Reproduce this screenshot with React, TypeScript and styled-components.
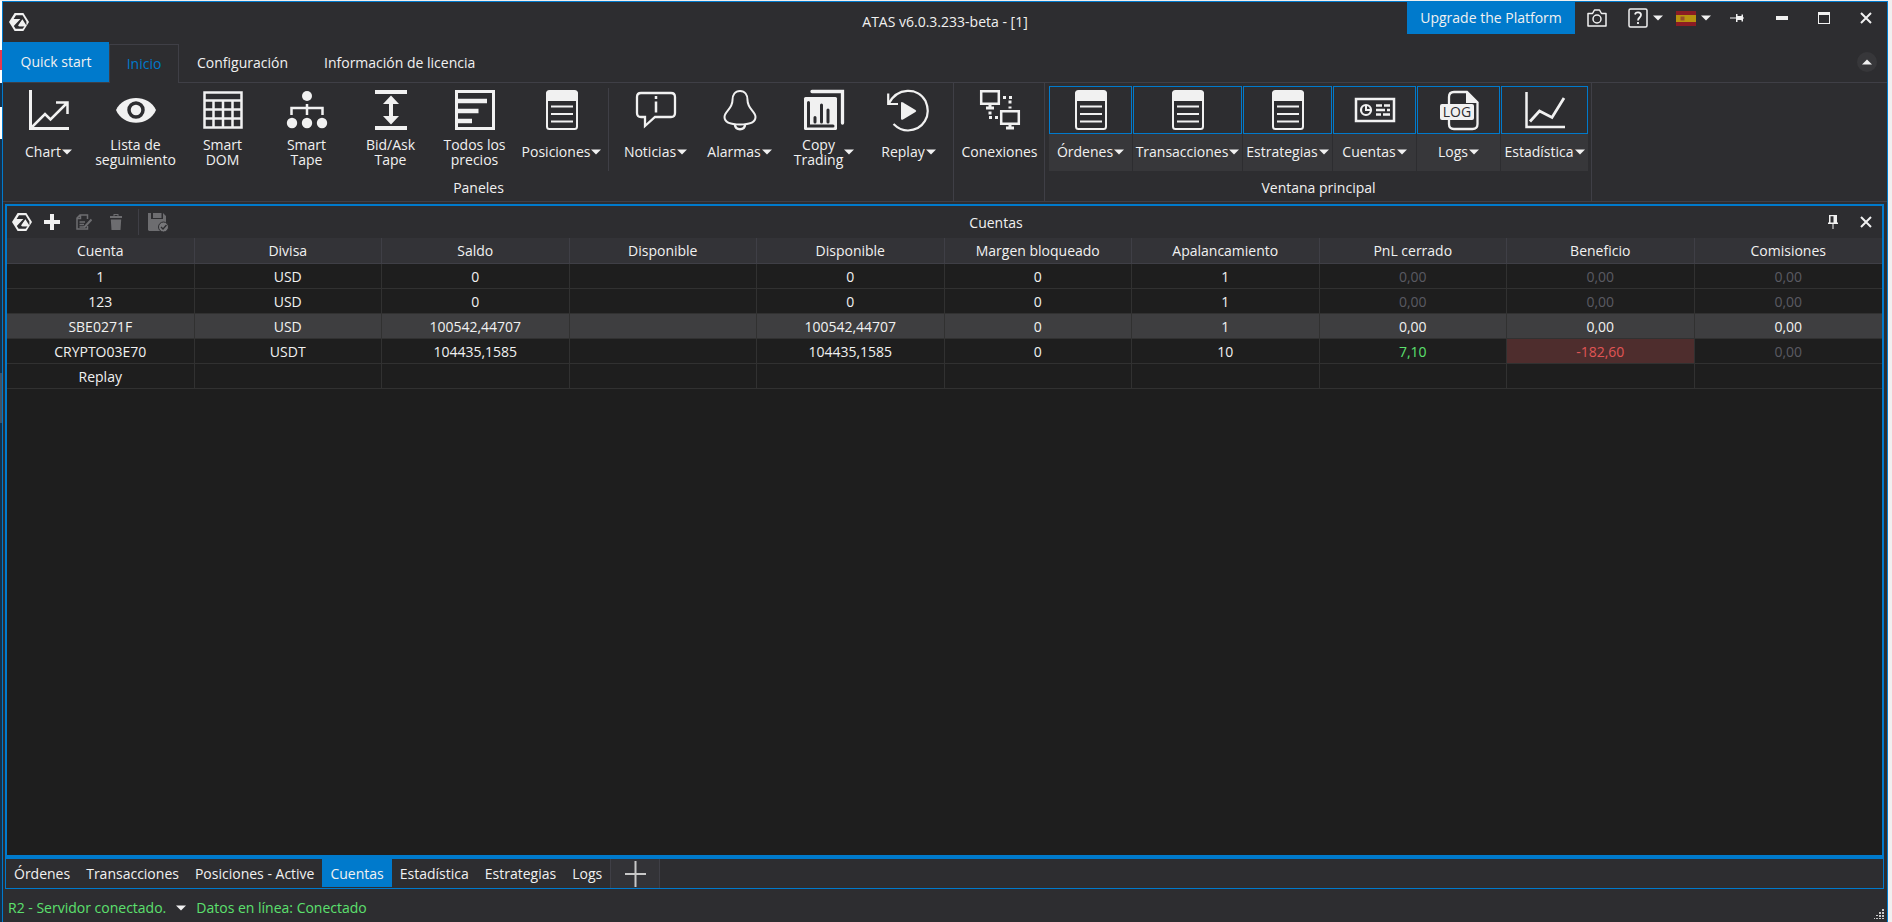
import React from "react";
import styled, { createGlobalStyle, css } from "styled-components";

const c = {
  accent: "#007acc",
  chrome: "#2d2d30",
  raised: "#37373a",
  header: "#333337",
  line: "#3f3f46",
  grid: "#313131",
  dark: "#1e1e1e",
  text: "#f1f1f1",
  faint: "#5a5a62",
  green: "#5ce06e",
  red: "#e05555",
};

const Global = createGlobalStyle`
  * { box-sizing: border-box; }
  body { margin: 0; background: #14304a; font: 14px/16px "Open Sans", "Noto Sans", sans-serif; color: ${c.text}; }
  button { font: inherit; color: inherit; background: none; border: 0; padding: 0; margin: 0; }
  svg { display: block; flex: none; }
`;

/* ---------- window ---------- */
const Desktop = styled.div`
  display: flex;
  min-height: 100vh;
  padding: 1px 4px 0 2px;
  background:
    linear-gradient(#f0f0f0, #f0f0f0) right top / 4px 100% no-repeat,
    linear-gradient(#f0f0f0, #f0f0f0) left top / 100% 1px no-repeat,
    linear-gradient(#ffffff 0 50px, #e8384f 50px 70px, #ffffff 70px 83px, #14304a 83px 107px, #ffffff 107px 139px, #14304a 139px 373px, #3f5266 373px 423px, #14304a 423px);
`;
const Window = styled.div`
  flex: 1;
  min-width: 0;
  display: flex;
  flex-direction: column;
  background: ${c.chrome};
  border: 1px solid ${c.accent};
  border-bottom: 0;
`;
const TitleBar = styled.header`
  display: grid;
  grid-template-columns: 1fr auto 1fr;
  height: 40px;
`;
const Brand = styled.div`
  padding: 10px 6px;
`;
const Title = styled.h1`
  margin: 0;
  font-size: 14px;
  font-weight: 400;
  line-height: 40px;
`;
const TitleActions = styled.div`
  display: flex;
  justify-content: flex-end;
  align-items: flex-start;
`;
const Upgrade = styled.button`
  height: 32px;
  width: 168px;
  margin-right: 12px;
  background: ${c.accent};
`;
const TitleButton = styled.button<{ $w: number }>`
  display: flex;
  align-items: center;
  gap: 5px;
  width: ${(p) => p.$w}px;
  height: 32px;
`;

/* ---------- ribbon ---------- */
const TabRow = styled.nav`
  display: flex;
  height: 41px;
  border-bottom: 1px solid ${c.line};
`;
const QuickStart = styled.button`
  width: 106px;
  background: ${c.accent};
`;
const RibbonTab = styled.button<{ $active?: boolean }>`
  padding: 2px 18px 0;
  ${(p) =>
    p.$active &&
    css`
      color: ${c.accent};
      background: ${c.chrome};
      border: 1px solid ${c.line};
      border-bottom: 0;
      margin: 2px 0 -1px;
      width: 70px;
      padding: 0;
    `}
`;
const Collapse = styled.button`
  display: grid;
  place-items: center;
  align-self: center;
  width: 20px;
  height: 20px;
  margin: 0 10px 0 auto;
  border-radius: 50%;
  background: ${c.raised};
`;
const Ribbon = styled.div`
  display: flex;
  height: 119px;
  border-bottom: 1px solid ${c.line};
`;
const Group = styled.section`
  padding: 3px 3px 0 4px;
  border-right: 1px solid ${c.line};
`;
const Tools = styled.div`
  display: flex;
  gap: 1px;
`;
const Caption = styled.div`
  text-align: center;
  line-height: 34px;
`;
const Divider = styled.div`
  width: 1px;
  height: 83px;
  margin: 2px 4px 0 1px;
  background: ${c.line};
`;
const Tool = styled.button<{ $w: number; $on?: boolean }>`
  display: flex;
  flex-direction: column;
  width: ${(p) => p.$w}px;
  height: 85px;
  background: ${(p) => (p.$on ? c.raised : "none")};
`;
const ToolIcon = styled.span<{ $on?: boolean }>`
  display: grid;
  place-items: center;
  width: 100%;
  height: 48px;
  border: 1px solid ${(p) => (p.$on ? c.accent : "transparent")};
  background: ${c.chrome};
`;
const ToolLabel = styled.span`
  flex: 1;
  display: flex;
  align-items: center;
  justify-content: center;
  gap: 1px;
  width: 100%;
  line-height: 15px;
  white-space: pre;
  padding-bottom: 2px;
`;

/* ---------- docked panel ---------- */
const Panel = styled.main`
  flex: 1;
  display: flex;
  flex-direction: column;
  margin: 2px 3px 0 2px;
  border: 2px solid ${c.accent};
  border-bottom-width: 4px;
  background: ${c.dark};
`;
const PanelBar = styled.div`
  display: flex;
  align-items: center;
  height: 32px;
  background: ${c.chrome};
`;
const PanelTools = styled.div`
  display: flex;
  align-items: center;
  padding-left: 5px;
`;
const PanelTitle = styled.h2`
  flex: 1;
  margin: 0;
  padding-top: 2px;
  text-align: center;
  font-size: 14px;
  font-weight: 400;
  line-height: 30px;
`;
const PanelActions = styled(PanelTools)`
  gap: 22px;
  padding-right: 10px;
`;
const IconButton = styled.button<{ $gap?: number }>`
  display: grid;
  place-items: center;
  height: 24px;
  margin-right: ${(p) => p.$gap ?? 0}px;
`;
const ToolSep = styled.div`
  width: 1px;
  height: 26px;
  margin-right: 9px;
  background: ${c.line};
`;
const Table = styled.table`
  width: 100%;
  table-layout: fixed;
  border-collapse: separate;
  border-spacing: 0;
  text-align: center;
`;
const Th = styled.th`
  height: 26px;
  padding: 0;
  font-weight: 400;
  background: ${c.header};
  border: 0 solid ${c.line};
  border-width: 0 1px 1px 0;
  &:last-child { border-right: 0; }
`;
type Tone = "faint" | "green" | "loss" | "text";
const Td = styled.td<{ $tone: Tone }>`
  height: 25px;
  padding: 2px 0 0;
  border: 0 solid ${c.grid};
  border-width: 0 1px 1px 0;
  color: ${(p) => ({ faint: c.faint, green: c.green, loss: c.red, text: c.text })[p.$tone]};
  background: ${(p) => (p.$tone === "loss" ? "#4e2d2d" : "none")};
  &:last-child { border-right: 0; }
`;
const Tr = styled.tr<{ $selected?: boolean }>`
  background: ${(p) => (p.$selected ? "#3e3e40" : "none")};
`;

/* ---------- bottom ---------- */
const DockTabs = styled.nav`
  display: flex;
  height: 30px;
  margin: 0 3px 0 2px;
  border: 1px solid ${c.accent};
  border-top: 0;
`;
const DockTab = styled.button<{ $active?: boolean }>`
  padding: 2px 8px 0;
  margin-bottom: 1px;
  background: ${(p) => (p.$active ? c.accent : "none")};
`;
const AddTab = styled.button`
  display: grid;
  place-items: center;
  width: 50px;
  background: ${c.header};
  border: 1px solid ${c.line};
  border-width: 0 1px;
`;
const Status = styled.footer`
  display: flex;
  align-items: center;
  gap: 10px;
  height: 33px;
  padding: 4px 3px 0 5px;
  color: ${c.green};
`;
const Grip = styled.svg`
  margin-left: auto;
  align-self: flex-end;
  margin-bottom: 3px;
`;

/* ---------- icons ---------- */
const F = "#f1f1f1";
const Caret = ({ up = false }: { up?: boolean }) => (
  <svg width="10" height="6" viewBox="0 0 10 6" aria-hidden>
    <path d={up ? "M0 5.5 5 .5l5 5z" : "M0 .5h10L5 5.5z"} fill={F} />
  </svg>
);
const Logo = () => (
  <svg width="20" height="20" viewBox="0 0 20 20" aria-label="ATAS">
    <path d="M5.6 1h8.8L20 10l-5.600 9H5.600L0 10z" fill={F} />
    <path d="M7 3.200h6.600L17.400 9.400v4L13.400 7.200 9 13.600l1.400.600h5.200l-2 2.600H6.600L4.800 14 11.400 7H4.600z" fill={c.chrome} />
    <path d="M12.600 8.800l3.600 5.400H9.600z" fill={F} />
  </svg>
);
const Ico = ({ children }: { children: React.ReactNode }) => (
  <svg width="44" height="44" viewBox="0 0 44 44" fill="none" stroke={F} strokeWidth="2" aria-hidden>
    {children}
  </svg>
);
const list = (
  <Ico>
    <rect x="7" y="4" width="30" height="37" rx="2.500" />
    <path d="M7 5.500Q7 3 9.500 3h25Q37 3 37 5.500V12H7z" fill={F} />
    <path d="M11 18.500h22M11 26h22M11 33.500h22" />
  </Ico>
);
const icons = {
  chart: (
    <Ico>
      <path d="M3.500 2v38.500H42" strokeWidth="3" />
      <path d="M4 40 18 26l5.500 5.500L40 15M29 14.500h11.500V26" strokeWidth="2.500" />
    </Ico>
  ),
  eye: (
    <Ico>
      <path d="M2 22C9 6 35 6 42 22 35 39 9 39 2 22z" fill={F} stroke="none" />
      <circle cx="22" cy="22" r="7" stroke={c.chrome} strokeWidth="3.500" />
    </Ico>
  ),
  dom: (
    <Ico>
      <path d="M3.500 4.500h37v35h-37zM3 12.500h38M12.500 13v26M22 13v26M31.500 13v26M3 21.500h38M3 30.500h38" strokeWidth="2.500" />
    </Ico>
  ),
  tape: (
    <Ico>
      <circle cx="22" cy="8" r="5" fill={F} stroke="none" />
      {[7, 22, 37].map((x) => <circle key={x} cx={x} cy="35" r="5.200" fill={F} stroke="none" />)}
      <path d="M22 16v11M6.500 27v-7h31v7" strokeWidth="2.500" />
    </Ico>
  ),
  bidask: (
    <Ico>
      <path d="M6 4h32M6 40h32M22 13v18" strokeWidth="4" />
      <path d="M22 7.500l8 8.500H14zM22 36.500l8-8.500H14z" fill={F} stroke="none" />
    </Ico>
  ),
  prices: (
    <Ico>
      <path d="M3.500 3.500h37v37h-37z" strokeWidth="3" />
      <path d="M5 13h29M5 23h20.500M5 33h14" strokeWidth="4.500" />
    </Ico>
  ),
  list,
  news: (
    <Ico>
      <path d="M7 5h30q4 0 4 4v16q0 4-4 4H21l-10 9v-9H7q-4 0-4-4V9q0-4 4-4z" strokeWidth="2.300" />
      <path d="M22 13.500v11M22 8v3" strokeWidth="2.500" />
    </Ico>
  ),
  bell: (
    <Ico>
      <path d="M22 3c5 0 7.500 4 7.500 9 0 9 8 11.500 8 17 0 5.500-7 7.500-15.500 7.500S6.500 34.500 6.500 29c0-5.500 8-8 8-17C14.500 7 17 3 22 3z" />
      <path d="M17 37c.500 5.500 9.500 5.500 10 0" strokeWidth="2.500" />
    </Ico>
  ),
  copy: (
    <Ico>
      <path d="M10 3.500h30.500V35" strokeWidth="3.300" strokeLinecap="round" />
      <rect x="2" y="9" width="33" height="33" rx="1.500" fill={F} stroke="none" />
      <path d="M6.500 14.500V38H31M13 29.500V34M19.500 17v17M26 22v12" stroke={c.chrome} strokeWidth="3" strokeLinecap="round" />
    </Ico>
  ),
  replay: (
    <Ico>
      <path d="M1.500 16C10-1 31-1 38.500 13 45 28 36 42 21 42.500c-6 0-11-3-14.500-6.500M1.200 5.500V16H11" strokeWidth="2.200" />
      <path d="M16 14.500q-2-1.200-2 1v15q0 2 2 1l12.500-7.500q1.500-1 0-2z" fill={F} stroke="none" />
    </Ico>
  ),
  conn: (
    <Ico>
      <path d="M3.200 3.200h17.600v12.600H3.200zM23.200 23.200h17.600v12.600H23.200z" strokeWidth="2.500" />
      <path d="M12 16v3M8 20h8M32 36v3M28 40h8" strokeWidth="3" />
      <path d="M25 9.500h9M32 12.500v8M12 23.500v4M11 29.500h9" strokeWidth="3" strokeDasharray="3 3" />
    </Ico>
  ),
  card: (
    <Ico>
      <rect x="3" y="11" width="38" height="22" strokeWidth="2.500" />
      <circle cx="13" cy="22" r="5" strokeWidth="2.200" />
      <path d="M13 18v4h4" />
      <path d="M23 17.500h6M31 17.500h6M23 22h9M34 22h3M23 26.500h5M30 26.500h7" strokeWidth="2.500" />
    </Ico>
  ),
  log: (
    <Ico>
      <path d="M12 16V9q0-5 5-5h13l10.500 10.500V36q0 5-5 5H17q-5 0-5-5v-4" strokeWidth="2.300" />
      <path d="M29 3 41.500 15H29z" fill={F} stroke="none" />
      <rect x="3" y="16" width="34" height="16" rx="2" fill={F} stroke="none" />
      <text x="20" y="29" textAnchor="middle" fontSize="14" fill={c.chrome} stroke="none">LOG</text>
    </Ico>
  ),
  stats: (
    <Ico>
      <path d="M3.500 4v35H42" strokeWidth="2.500" />
      <path d="M7 33.500 16.500 23 29 29.500 41 10" strokeWidth="2.800" />
    </Ico>
  ),
};

/* ---------- data ---------- */
type Item = { icon: keyof typeof icons; label: string; w: number; menu?: boolean };
const panels: Item[] = [
  { icon: "chart", label: "Chart", w: 83, menu: true },
  { icon: "eye", label: "Lista de\nseguimiento", w: 89 },
  { icon: "dom", label: "Smart\nDOM", w: 83 },
  { icon: "tape", label: "Smart\nTape", w: 83 },
  { icon: "bidask", label: "Bid/Ask\nTape", w: 83 },
  { icon: "prices", label: "Todos los\nprecios", w: 83 },
  { icon: "list", label: "Posiciones", w: 89, menu: true },
];
const panels2: Item[] = [
  { icon: "news", label: "Noticias", w: 83, menu: true },
  { icon: "bell", label: "Alarmas", w: 83, menu: true },
  { icon: "copy", label: "Copy\nTrading", w: 84, menu: true },
  { icon: "replay", label: "Replay", w: 83, menu: true },
];
const mainTools: Item[] = [
  { icon: "list", label: "Órdenes", w: 83, menu: true },
  { icon: "list", label: "Transacciones", w: 109, menu: true },
  { icon: "list", label: "Estrategias", w: 89, menu: true },
  { icon: "card", label: "Cuentas", w: 83, menu: true },
  { icon: "log", label: "Logs", w: 83, menu: true },
  { icon: "stats", label: "Estadística", w: 87, menu: true },
];
const columns = ["Cuenta", "Divisa", "Saldo", "Disponible", "Disponible", "Margen bloqueado", "Apalancamiento", "PnL cerrado", "Beneficio", "Comisiones"];
const rows = [
  ["1", "USD", "0", "", "0", "0", "1", "0,00", "0,00", "0,00"],
  ["123", "USD", "0", "", "0", "0", "1", "0,00", "0,00", "0,00"],
  ["SBE0271F", "USD", "100542,44707", "", "100542,44707", "0", "1", "0,00", "0,00", "0,00"],
  ["CRYPTO03E70", "USDT", "104435,1585", "", "104435,1585", "0", "10", "7,10", "-182,60", "0,00"],
  ["Replay", "", "", "", "", "", "", "", "", ""],
];
const selected = 2;
const dock = ["Órdenes", "Transacciones", "Posiciones - Active", "Cuentas", "Estadística", "Estrategias", "Logs"];

const toneOf = (value: string, row: number): Tone => {
  if (value === "0,00") return row === selected ? "text" : "faint";
  if (value === "7,10") return "green";
  return value.startsWith("-") ? "loss" : "text";
};

const ToolButtons = ({ items, on }: { items: Item[]; on?: boolean }) => (
  <>
    {items.map((t) => (
      <Tool key={t.label} $w={t.w} $on={on}>
        <ToolIcon $on={on}>{icons[t.icon]}</ToolIcon>
        <ToolLabel>
          <span>{t.label}</span>
          {t.menu && <Caret />}
        </ToolLabel>
      </Tool>
    ))}
  </>
);

const Close = () => (
  <svg width="12" height="12" viewBox="0 0 12 12" stroke={F} strokeWidth="2" aria-hidden>
    <path d="M1 1l10 10M11 1 1 11" />
  </svg>
);

export default function App() {
  return (
    <Desktop>
      <Global />
      <Window>
        <TitleBar>
          <Brand><Logo /></Brand>
          <Title>ATAS v6.0.3.233-beta - [1]</Title>
          <TitleActions>
            <Upgrade>Upgrade the Platform</Upgrade>
            <TitleButton $w={41} aria-label="Captura">
              <svg width="20" height="18" viewBox="0 0 20 18" fill="none" stroke={F} strokeWidth="1.500">
                <path d="M1 4.500h4.500L7.500 1h5l2 3.500H19V17H1z" strokeLinejoin="round" />
                <circle cx="10" cy="10" r="4" />
              </svg>
            </TitleButton>
            <TitleButton $w={48} aria-label="Ayuda">
              <svg width="20" height="20" viewBox="0 0 20 20" fill="none" stroke={F} strokeWidth="1.500">
                <rect x="1" y="1" width="18" height="18" rx="1.500" />
                <path d="M7 6.500c.500-3 6-3 6 .500 0 2.500-3 2.500-3 5.500M10 14v2" strokeWidth="1.800" />
              </svg>
              <Caret />
            </TitleButton>
            <TitleButton $w={54} aria-label="Idioma">
              <svg width="20" height="15" viewBox="0 0 20 15">
                <path d="M0 0h20v15H0z" fill="#8b1c24" />
                <path d="M0 4h20v7H0z" fill="#b8920f" />
                <path d="M4.500 5.500h4v4h-4z" fill="#96502a" />
              </svg>
              <Caret />
            </TitleButton>
            <TitleButton $w={46} aria-label="Fijar ventana">
              <svg width="14" height="8" viewBox="0 0 14 8" fill={F}>
                <path d="M0 3.500h6v1H0zM6 0h1.500v2h4V.500H13v3h1v1h-1v3h-1.500V6h-4v2H6z" />
              </svg>
            </TitleButton>
            <TitleButton $w={42} aria-label="Minimizar">
              <svg width="12" height="4" viewBox="0 0 12 4"><path d="M0 0h12v4H0z" fill={F} /></svg>
            </TitleButton>
            <TitleButton $w={42} aria-label="Maximizar">
              <svg width="12" height="12" viewBox="0 0 12 12"><path d="M0 0h12v12H0zM1 3v8h10V3z" fill={F} fillRule="evenodd" /></svg>
            </TitleButton>
            <TitleButton $w={27} aria-label="Cerrar"><Close /></TitleButton>
          </TitleActions>
        </TitleBar>

        <TabRow>
          <QuickStart>Quick start</QuickStart>
          <RibbonTab $active>Inicio</RibbonTab>
          <RibbonTab>Configuración</RibbonTab>
          <RibbonTab>Información de licencia</RibbonTab>
          <Collapse aria-label="Contraer"><Caret up /></Collapse>
        </TabRow>

        <Ribbon>
          <Group>
            <Tools>
              <ToolButtons items={panels} />
              <Divider />
              <ToolButtons items={panels2} />
            </Tools>
            <Caption>Paneles</Caption>
          </Group>
          <Group>
            <Tools><ToolButtons items={[{ icon: "conn", label: "Conexiones", w: 83 }]} /></Tools>
          </Group>
          <Group>
            <Tools><ToolButtons items={mainTools} on /></Tools>
            <Caption>Ventana principal</Caption>
          </Group>
        </Ribbon>

        <Panel>
          <PanelBar>
            <PanelTools>
              <IconButton $gap={12} aria-label="ATAS"><Logo /></IconButton>
              <IconButton $gap={16} aria-label="Añadir">
                <svg width="16" height="16" viewBox="0 0 16 16"><path d="M6 0h4v6h6v4h-6v6H6v-6H0V6h6z" fill={F} /></svg>
              </IconButton>
              <IconButton $gap={18} aria-label="Editar">
                <svg width="16" height="16" viewBox="0 0 16 16" fill="none" stroke="#6d6d70" strokeWidth="1.500">
                  <path d="M11.500 5V1H4L1 4v11h10.500v-3M3.500 8H9M3.500 10.500H8M3.500 13H8M1 4.500h3.500V1" />
                  <path d="M15.500 5.500 9.500 12l-1.500 1.500" strokeWidth="2" />
                </svg>
              </IconButton>
              <IconButton $gap={16} aria-label="Eliminar">
                <svg width="12" height="16" viewBox="0 0 12 16" fill="#6d6d70">
                  <path d="M0 2h3.500V0h5v2H12v2H0zM4.500 1v1h3V1zM.800 5.500h10.400L10.500 16h-9z" fillRule="evenodd" />
                </svg>
              </IconButton>
              <ToolSep />
              <IconButton aria-label="Guardar">
                <svg width="21" height="19" viewBox="0 0 21 19">
                  <path d="M0 0h3v6h12V0l3 3v15H1l-1-1zM10 0h2v5h-2z" fill="#6d6d70" />
                  <path d="M5 0h5v5H5zM12 0h1.500v5H12z" fill="#6d6d70" />
                  <circle cx="15.500" cy="14" r="5" fill="#77777a" stroke={c.chrome} />
                  <path d="M13 14l2 2 3.500-4" fill="none" stroke={c.chrome} strokeWidth="1.300" />
                </svg>
              </IconButton>
            </PanelTools>
            <PanelTitle>Cuentas</PanelTitle>
            <PanelActions>
              <IconButton aria-label="Anclar">
                <svg width="10" height="14" viewBox="0 0 10 14" fill={F}>
                  <path d="M1 0h8v7.500h1V9H5.500v5h-1V9H0V7.500h1zM2.500 1.300v6.200h3V1.300z" fillRule="evenodd" />
                </svg>
              </IconButton>
              <IconButton aria-label="Cerrar panel"><Close /></IconButton>
            </PanelActions>
          </PanelBar>
          <Table>
            <thead>
              <tr>{columns.map((h, i) => <Th key={i} scope="col">{h}</Th>)}</tr>
            </thead>
            <tbody>
              {rows.map((r, i) => (
                <Tr key={i} $selected={i === selected}>
                  {r.map((v, j) => <Td key={j} $tone={toneOf(v, i)}>{v}</Td>)}
                </Tr>
              ))}
            </tbody>
          </Table>
        </Panel>

        <DockTabs>
          {dock.map((d) => <DockTab key={d} $active={d === "Cuentas"}>{d}</DockTab>)}
          <AddTab aria-label="Nueva pestaña">
            <svg width="21" height="26" viewBox="0 0 21 26" stroke="#c8c8c8" strokeWidth="2">
              <path d="M10.500 0v26M0 13h21" />
            </svg>
          </AddTab>
        </DockTabs>
        <Status>
          <span>R2 - Servidor conectado.</span>
          <Caret />
          <span>Datos en línea: Conectado</span>
          <Grip width="10" height="10" viewBox="0 0 10 10" fill="#c8c8c8" aria-hidden>
            <path d="M8 0h2v2H8zM5 3h2v2H5zM8 3h2v2H8zM2 6h2v1H2zM5 6h2v2H5zM8 6h2v2H8zM0 9h1v1H0zM2 9h2v1H2zM5 9h2v1H5zM8 9h2v1H8z" />
          </Grip>
        </Status>
      </Window>
    </Desktop>
  );
}
